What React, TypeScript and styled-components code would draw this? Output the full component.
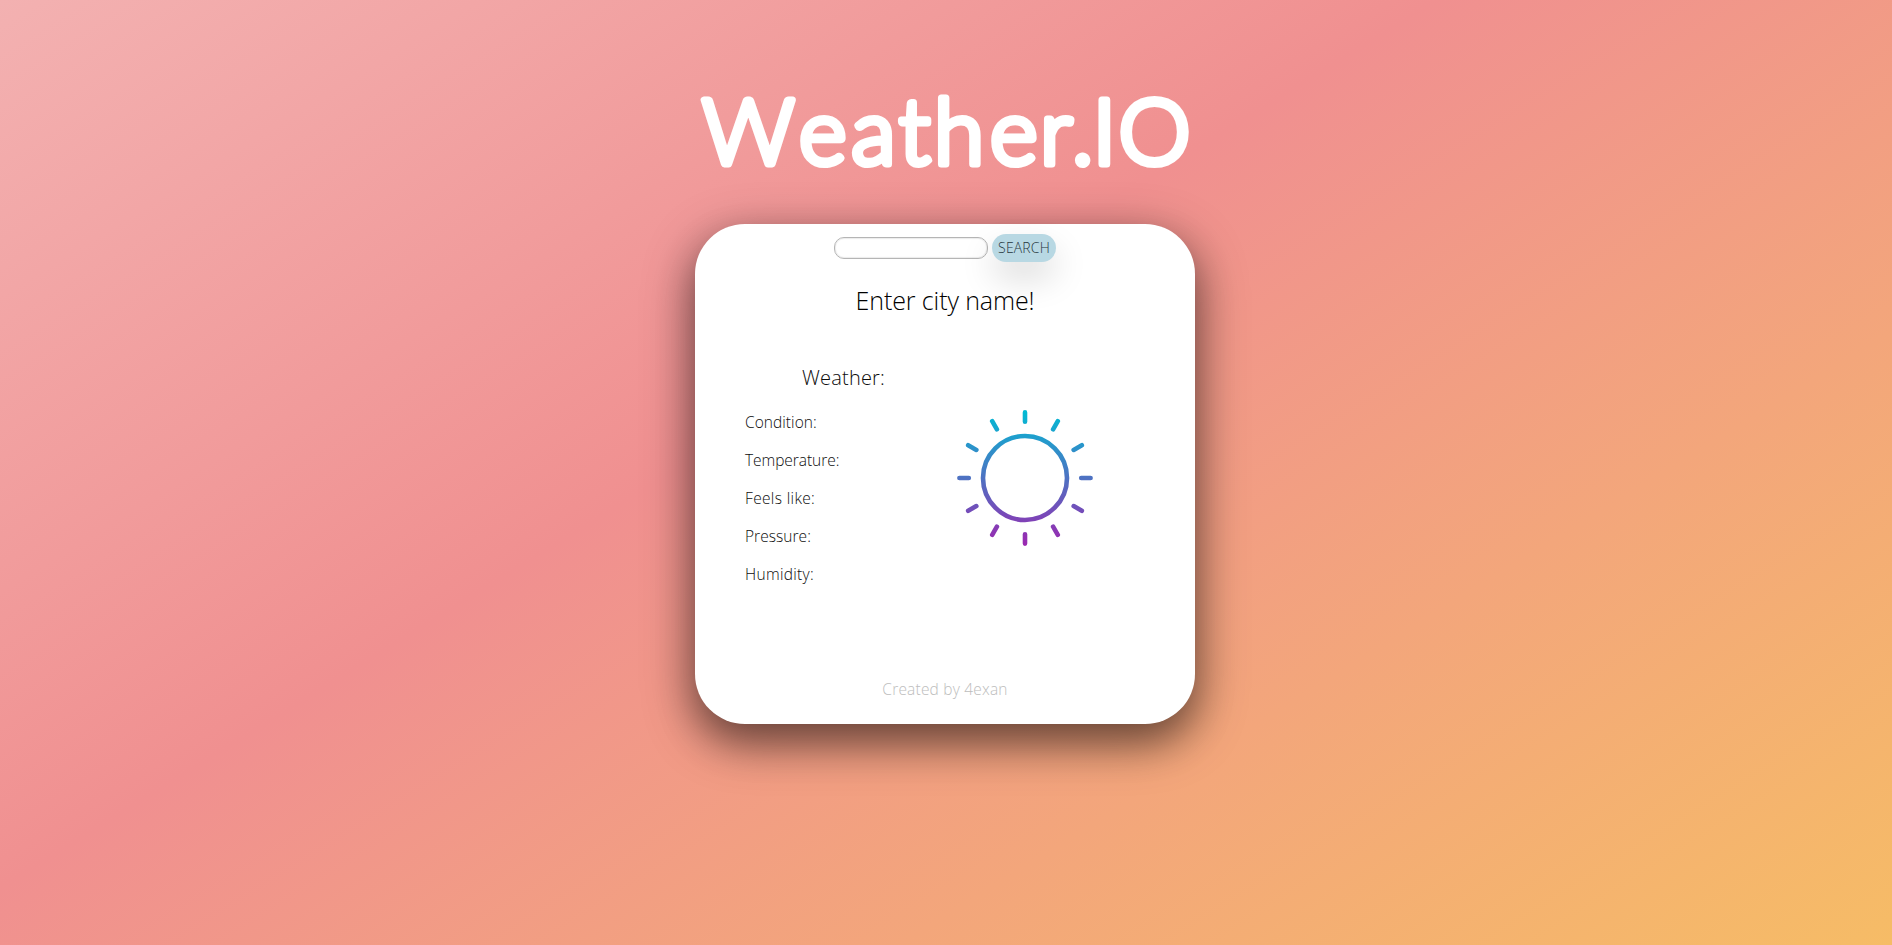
import React from 'react';
import styled, { createGlobalStyle } from 'styled-components';

const Global = createGlobalStyle`
  * { box-sizing: border-box; }
  html, body { margin: 0; height: 100%; }
  body { font-family: "Open Sans", "Noto Sans", sans-serif; font-weight: 320; color: #0c0c0c; }
`;

const Page = styled.div`
  height: 945px;
  padding-right: 2px;
  overflow: hidden;
  display: flex;
  flex-direction: column;
  align-items: center;
  background: linear-gradient(148.3deg, #f3b1b1 0%, #f09090 42%, #f6bc66 100%);
`;

const Title = styled.h1`
  margin: 84px 0 40px;
  height: 100px;
  flex: none;
`;

const Wordmark = styled.svg`
  display: block;
  width: 500px;
  height: 100px;
  overflow: visible;
  font-family: Lato, sans-serif;
  font-size: 91px;
  font-weight: 300;
  fill: #fff;
  stroke: #fff;
  stroke-width: 7px;
  stroke-linejoin: round;
`;

const Card = styled.main`
  width: 500px;
  height: 500px;
  flex: none;
  border-radius: 50px;
  background: #fff;
  display: flex;
  flex-direction: column;
  box-shadow: 0 19px 38px rgba(0, 0, 0, 0.3), 0 15px 52px rgba(0, 0, 0, 0.42);
`;

const SearchBar = styled.form`
  display: flex;
  justify-content: center;
  align-items: center;
  gap: 4px;
  height: 28px;
  margin-top: 10px;
`;

const CityInput = styled.input`
  width: 154px;
  height: 22px;
  padding: 1px 10px;
  border: 1px solid #b5b5b5;
  border-radius: 10px;
  background: #fff;
  box-shadow: inset 0 0 1px 1px #ececec;
  outline: none;
`;

const SearchButton = styled.button`
  width: 64px;
  height: 28px;
  padding: 0 0 1px;
  border: 0;
  border-radius: 14px;
  background: #b8d8e3;
  color: #26363c;
  font: 350 14px "Open Sans", sans-serif;
  letter-spacing: 0.15px;
  box-shadow: 0 16px 34px rgba(0, 0, 0, 0.15);
`;

const Prompt = styled.h2`
  margin: 21px 0 0;
  line-height: 34px;
  font-size: 25px;
  font-weight: 320;
  letter-spacing: -0.1px;
  text-align: center;
  color: #000;
`;

const Body = styled.div`
  display: flex;
  margin-top: 47px;
  padding-left: 50px;
`;

const Details = styled.section`
  width: 197px;
`;

const Heading = styled.h3`
  margin: 0 0 20px;
  line-height: 27px;
  font-size: 20px;
  font-weight: 320;
  letter-spacing: 0.2px;
  text-align: center;
`;

const Row = styled.p<{ $spacing: number }>`
  margin: 0 0 16px;
  line-height: 22px;
  font-size: 15.5px;
  letter-spacing: ${(p) => p.$spacing}px;
`;

const SunIcon = styled.svg`
  width: 138px;
  height: 138px;
  margin: 45px 0 0 14px;
`;

const Footer = styled.footer`
  margin: auto 0 24px;
  line-height: 22px;
  font-size: 15.5px;
  letter-spacing: 0.2px;
  text-align: center;
  color: #bdbdbd;
`;

const rows = [
  { label: 'Condition:', spacing: 0.05 },
  { label: 'Temperature:', spacing: -0.05 },
  { label: 'Feels like:', spacing: 0.35 },
  { label: 'Pressure:', spacing: 0.05 },
  { label: 'Humidity:', spacing: 0.3 },
];

const rays = Array.from({ length: 12 }, (_, i) => {
  const a = (i * Math.PI) / 6;
  const at = (r: number) => `${(r * Math.sin(a)).toFixed(2)} ${(-r * Math.cos(a)).toFixed(2)}`;
  return `M${at(56.2)}L${at(65.6)}`;
}).join('');

export default function App() {
  return (
    <Page>
      <Global />
      <Title>
        <Wordmark viewBox="0 0 500 100">
          <text x="7 104 156.600 204 239 295 345 377 397.500 423.500" y="80">Weather.IO</text>
        </Wordmark>
      </Title>
      <Card>
        <SearchBar>
          <CityInput />
          <SearchButton type="button">SEARCH</SearchButton>
        </SearchBar>
        <Prompt>Enter city name!</Prompt>
        <Body>
          <Details>
            <Heading>Weather:</Heading>
            {rows.map((r) => <Row key={r.label} $spacing={r.spacing}>{r.label}</Row>)}
          </Details>
          <SunIcon viewBox="-69 -69 138 138" fill="none" stroke="url(#sun)" strokeWidth="4.6" strokeLinecap="round">
            <defs>
              <linearGradient id="sun" gradientUnits="userSpaceOnUse" x1="0" y1="-68" x2="0" y2="68">
                <stop offset="0" stopColor="#00bcd4" />
                <stop offset="1" stopColor="#9c27b0" />
              </linearGradient>
            </defs>
            <circle r="42" />
            <path d={rays} />
          </SunIcon>
        </Body>
        <Footer>Created by 4exan</Footer>
      </Card>
    </Page>
  );
}
